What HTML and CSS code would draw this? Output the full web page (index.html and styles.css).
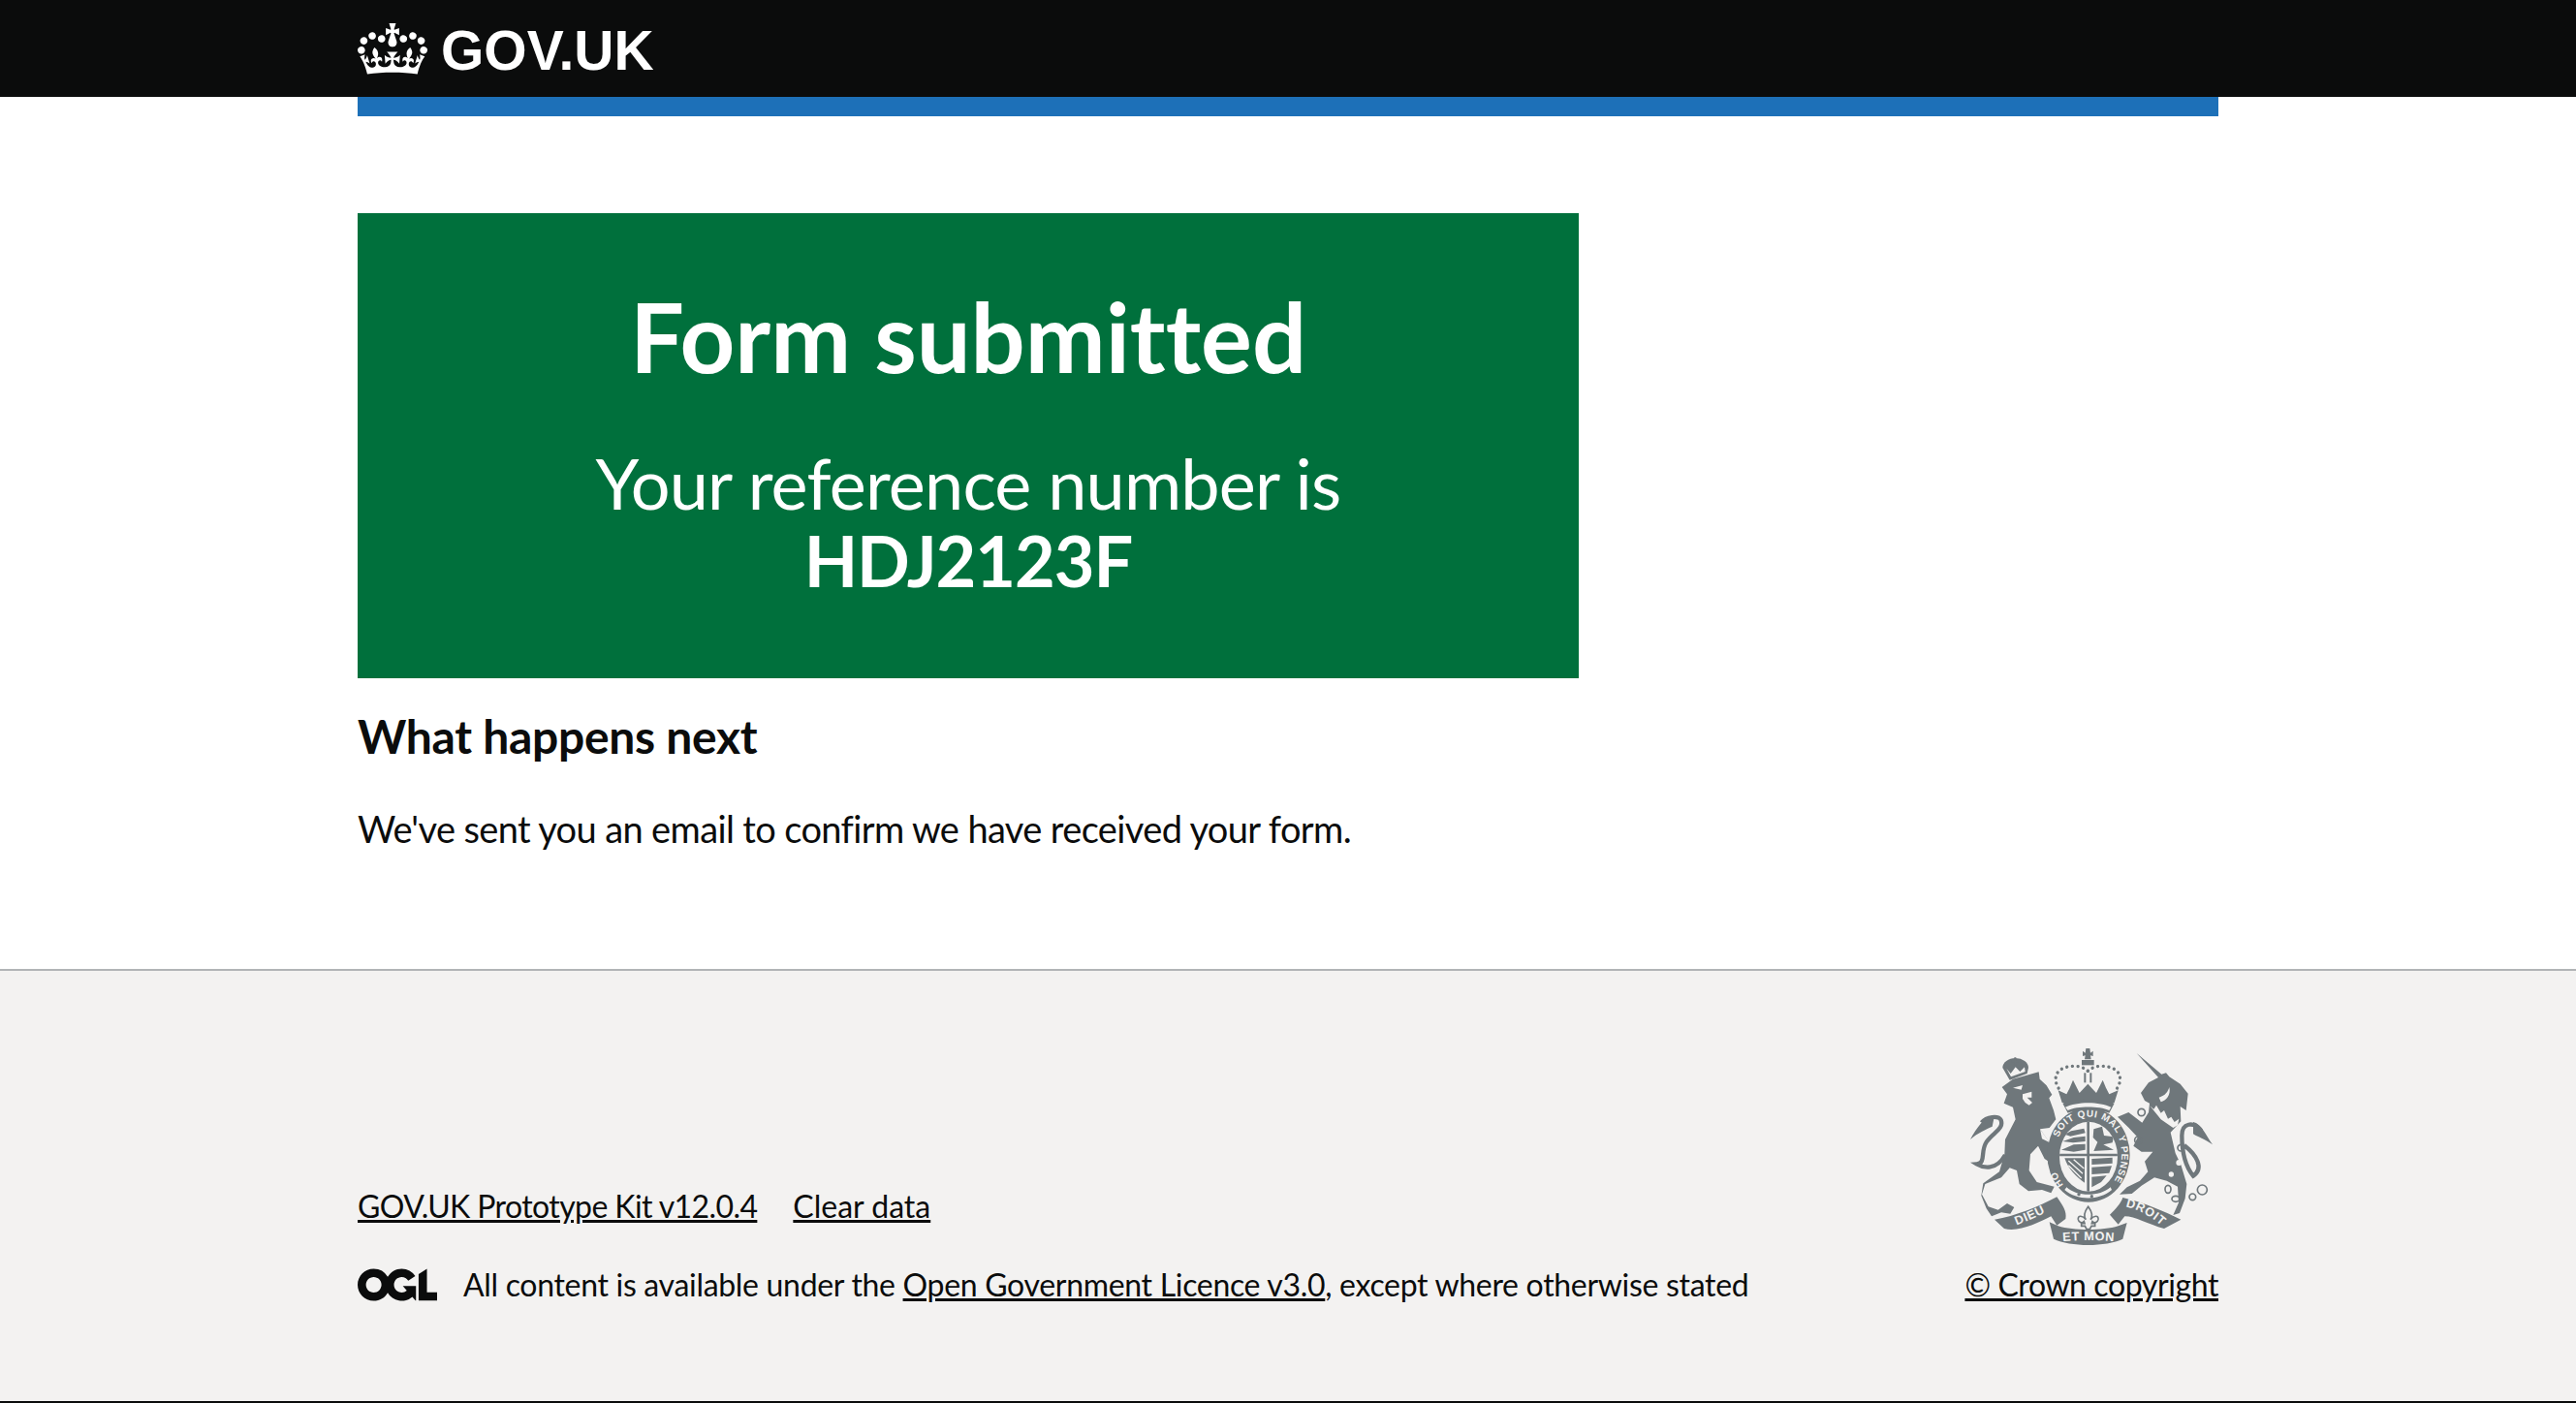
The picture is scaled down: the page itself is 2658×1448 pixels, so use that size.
FILE: index.html
```html
<!DOCTYPE html>
<html lang="en">
<head>
<meta charset="utf-8">
<title>Form submitted - GOV.UK</title>
<link rel="stylesheet" href="styles.css">
</head>
<body>

<header class="site-header">
  <div class="width-container">
    <a class="logo" href="#">
      <svg class="logo-crown" viewBox="0 0 132 97" aria-hidden="true"><path fill="currentColor" fill-rule="evenodd" d="M25 30.2c3.5 1.5 7.7-.2 9.1-3.7 1.5-3.6-.2-7.8-3.9-9.2-3.6-1.4-7.6.3-9.1 3.9-1.4 3.5.3 7.5 3.9 9zM9 39.5c3.6 1.5 7.8-.2 9.2-3.7 1.5-3.6-.2-7.8-3.9-9.1-3.6-1.5-7.6.2-9.1 3.8-1.4 3.5.3 7.5 3.8 9zM4.4 57.2c3.5 1.5 7.7-.2 9.1-3.8 1.5-3.6-.2-7.7-3.9-9.1-3.5-1.5-7.6.3-9.1 3.8-1.4 3.5.3 7.6 3.9 9.1zm38.3-21.4c3.5 1.5 7.7-.2 9.1-3.8 1.5-3.6-.2-7.7-3.9-9.1-3.6-1.5-7.6.3-9.1 3.8-1.3 3.6.4 7.7 3.9 9.1zm64.4-5.6c-3.6 1.5-7.8-.2-9.1-3.7-1.5-3.6.2-7.8 3.8-9.2 3.6-1.4 7.7.3 9.2 3.9 1.3 3.5-.4 7.5-3.9 9zm15.9 9.3c-3.6 1.5-7.7-.2-9.1-3.7-1.5-3.6.2-7.8 3.7-9.1 3.6-1.5 7.7.2 9.2 3.8 1.5 3.5-.3 7.5-3.8 9zm4.7 17.7c-3.6 1.5-7.8-.2-9.2-3.8-1.5-3.6.2-7.7 3.9-9.1 3.6-1.5 7.7.3 9.2 3.8 1.3 3.5-.4 7.6-3.9 9.1zM89.3 35.8c-3.6 1.5-7.8-.2-9.2-3.8-1.4-3.6.2-7.7 3.9-9.1 3.6-1.5 7.7.3 9.2 3.8 1.4 3.6-.3 7.7-3.9 9.1zM69.7 17.7l8.9 4.7V9.3l-8.9 2.8c-.2-.3-.5-.6-.9-.9L72.4 0H59.6l3.5 11.2c-.3.3-.6.5-.9.9l-8.8-2.8v13.1l8.8-4.7c.3.3.6.7.9.9l-5 15.4v.1c-.2.8-.4 1.6-.4 2.4 0 4.1 3.1 7.5 7 8.1h.2c.3 0 .7.1 1 .1.4 0 .7 0 1-.1h.2c4-.6 7.1-4.1 7.1-8.1 0-.8-.1-1.7-.4-2.4V34l-5.1-15.4c.4-.2.7-.6 1-.9zM66 92.8c16.9 0 32.8 1.1 47.1 3.2 4-16.9 8.9-26.7 14-33.5l-9.6-3.4c1 4.9 1.1 7.2 0 10.2-1.5-1.4-3-4.3-4.2-8.7L108.6 76c2.8-2 5-3.2 7.5-3.3-4.4 9.4-10 11.9-13.6 11.2-4.3-.8-6.3-4.6-5.6-7.9 1-4.7 5.7-5.9 8-.5 4.3-8.7-3-11.4-7.6-8.8 7.1-7.2 7.9-13.5 2.1-21.1-8 6.1-8.1 12.3-4.5 20.8-4.7-5.4-12.1-2.5-9.5 6.2 3.4-5.2 7.9-2 7.2 3.1-.6 4.3-6.4 7.8-13.5 7.2-10.3-.9-10.9-8-11.2-13.8 2.5-.5 7.1 1.8 11 7.3L80.2 60c-4.1 4.4-8 5.3-12.3 5.4 1.4-4.4 8-11.6 8-11.6H55.5s6.4 7.2 7.9 11.6c-4.2-.1-8-1-12.3-5.4l1.4 16.4c3.9-5.5 8.5-7.7 10.9-7.3-.3 5.8-.9 12.8-11.1 13.8-7.2.6-12.9-2.9-13.5-7.2-.7-5 3.8-8.3 7.1-3.1 2.7-8.7-4.6-11.6-9.4-6.2 3.7-8.5 3.6-14.7-4.6-20.8-5.8 7.6-5 13.9 2.2 21.1-4.7-2.6-11.9.1-7.7 8.8 2.3-5.5 7.1-4.2 8.1.5.7 3.3-1.3 7.1-5.7 7.9-3.5.7-9-1.8-13.5-11.2 2.5.1 4.7 1.3 7.5 3.3l-4.7-15.4c-1.2 4.4-2.7 7.2-4.3 8.7-1.1-3-.9-5.3 0-10.2l-9.5 3.4c5 6.9 9.9 16.7 14 33.5 14.8-2.1 30.8-3.2 47.7-3.2z"/></svg>
      <span class="logo-text">GOV.UK</span>
    </a>
  </div>
</header>
<div class="width-container header-bar"></div>

<main class="width-container main-wrapper">
  <div class="two-thirds">
    <div class="panel">
      <h1 class="panel-title">Form submitted</h1>
      <div class="panel-body">Your reference number is<br><strong>HDJ2123F</strong></div>
    </div>
    <h2 class="heading-m">What happens next</h2>
    <p class="body">We've sent you an email to confirm we have received your form.</p>
  </div>
</main>

<footer class="site-footer">
  <div class="width-container footer-row">
    <div class="footer-meta">
      <ul class="footer-links">
        <li class="kit-link"><a href="#">GOV.UK Prototype Kit v12.0.4</a></li>
        <li><a href="#">Clear data</a></li>
      </ul>
      <div class="licence">
        <svg class="ogl" viewBox="0 0 483.2 195.7" aria-hidden="true"><path fill="currentColor" d="M421.5 142.8V.1l-50.7 32.3v161.1h112.4v-50.7zm-122.3-9.6A47.12 47.12 0 0 1 221 97.8c0-26 21.1-47.1 47.1-47.1 16.7 0 31.4 8.7 39.7 21.8l42.7-27.2A97.63 97.63 0 0 0 268.1 0c-36.5 0-68.3 20.1-85.1 49.7A98 98 0 0 0 97.8 0C43.9 0 0 43.9 0 97.8s43.9 97.8 97.8 97.8c36.5 0 68.3-20.1 85.1-49.7a97.76 97.76 0 0 0 149.6 25.4l19.4 22.2h3v-87.8h-80l24.3 27.5zM97.8 145c-26 0-47.1-21.1-47.1-47.1s21.1-47.1 47.1-47.1 47.2 21 47.2 47S123.8 145 97.8 145"/></svg>
        <span>All content is available under the <a href="#">Open Government Licence v3.0</a>, except where otherwise stated</span>
      </div>
    </div>
    <div class="copyright">
      <svg class="crest" viewBox="100 70 750 612" role="img" aria-label="Royal coat of arms">
        <defs>
          <path id="garter-main" d="M366,372 C380,300 430,282 466,282 C530,282 568,330 568,400 C568,440 550,480 528,502"/>
          <path id="garter-ho" d="M404,506 C380,490 366,460 362,430"/>
          <path id="ribbon-left" d="M232,622 Q290,600 345,572"/>
          <path id="ribbon-mid" d="M378,668 Q465,660 555,668"/>
          <path id="ribbon-right" d="M578,560 Q640,572 695,622"/>
          <clipPath id="shield-clip"><ellipse cx="466" cy="405" rx="90" ry="108"/></clipPath>
        </defs>

        <!-- lion -->
        <path class="crest-fill" d="M198,190 L232,165 L312,143 L315,165 L336,185 L353,213 L344,224 L358,262 L365,290 L345,316 L316,320 L345,362 L368,392 L374,424 L352,426 L330,412 L310,372 L286,398 L282,448 L306,484 L360,498 L350,518 L322,508 L280,512 L252,490 L244,448 L222,440 L196,470 L146,490 L136,522 L156,560 L186,570 L214,550 L236,562 L224,582 L196,578 L166,590 L150,566 L134,526 L140,488 L190,452 L206,398 L208,352 L240,290 L232,252 L204,240 L214,212 Z"/>
        <path class="crest-white" d="M232,192 L262,184 L258,198 Z M262,212 L290,204 L290,222 L276,222 L292,238 L282,246 L270,238 L262,226 Z M316,320 L346,362 L322,350 Z"/>
        <path class="crest-line" d="M208,400 C180,450 140,440 120,428 C150,425 130,390 150,360 C170,330 205,320 195,292 C188,278 150,280 135,300"/>
        <path class="crest-fill" d="M175,278 C145,278 118,320 100,352 C122,332 150,320 168,312 Z"/>

        <!-- lion's crown -->
        <path class="crest-fill" d="M200,130 A40,30 0 0 1 280,130 L276,148 L222,168 Z"/>
        <path class="crest-white" d="M212,132 L225,148 L240,128 L254,142 L268,128 L270,142 L226,158 Z"/>
        <path class="crest-fill" d="M227,108 H236 V98 H242 V108 H250 V114 H242 V124 H236 V114 H227 Z"/>

        <!-- royal crown over shield -->
        <path class="crest-fill" d="M448,78 L456,84 L458,70 H470 L472,84 L480,78 V94 L472,92 L474,104 H454 L456,92 L448,94 Z"/>
        <rect class="crest-fill" x="445" y="106" width="38" height="16"/>
        <rect class="crest-fill" x="452" y="146" width="6" height="30"/>
        <rect class="crest-fill" x="470" y="146" width="6" height="30"/>
        <path class="crest-dots" d="M464,140 C440,118 400,122 376,138 C358,155 362,182 380,202"/>
        <path class="crest-dots" d="M464,140 C488,118 528,122 552,138 C570,155 566,182 548,202"/>
        <path class="crest-fill" d="M372,200 L398,212 L408,192 L418,168 L430,192 L438,208 L464,180 L490,208 L498,192 L510,168 L520,192 L530,212 L558,200 L546,238 L384,238 Z"/>

        <!-- garter and shield -->
        <ellipse class="crest-fill" cx="466" cy="400" rx="128" ry="146"/>
        <path class="crest-fill" d="M386,240 C420,224 510,224 546,240 L530,270 C500,258 430,258 402,270 Z"/>
        <path class="crest-white" d="M394,252 C430,234 500,234 536,252 L530,262 C500,248 430,248 402,262 Z"/>
        <ellipse class="crest-white" cx="466" cy="405" rx="90" ry="108"/>
        <g clip-path="url(#shield-clip)">
          <path class="crest-fill" d="M461,295 H469 V515 H461 Z M374,396 H558 V404 H374 Z"/>
          <path class="crest-fill" d="M392,336 L412,326 L452,318 L456,332 L410,342 Z M386,358 L420,346 L456,342 L456,358 L418,362 Z M382,384 L420,368 L456,366 L456,384 L420,390 Z"/>
          <path class="crest-fill" d="M482,320 L508,312 L514,340 L544,344 L540,362 L512,368 L544,384 L482,388 L494,360 L480,346 Z"/>
          <path class="crest-fill" d="M392,410 H454 V486 C430,470 404,445 392,410 Z"/>
          <path class="crest-white-line" d="M404,418 L448,458 M420,414 L452,442 M404,432 L444,472"/>
          <path class="crest-fill" d="M476,412 L540,408 L540,426 L476,430 Z M476,438 L538,434 L530,456 L476,460 Z M476,468 L522,464 L505,484 L476,500 Z"/>
        </g>
        <text class="crest-text"><textPath href="#garter-main" startOffset="50%" text-anchor="middle">SOIT QUI MAL Y PENSE</textPath></text>
        <text class="crest-text"><textPath href="#garter-ho" startOffset="50%" text-anchor="middle">HO</textPath></text>
        <path class="crest-white" d="M398,500 C430,530 500,530 534,500 L538,508 C500,542 430,542 392,508 Z"/>
        <circle class="crest-fill" cx="436" cy="522" r="5"/>
        <circle class="crest-fill" cx="476" cy="528" r="5"/>

        <!-- unicorn -->
        <path class="crest-fill" d="M615,85 L692,150 L706,146 L716,158 L750,180 L774,210 L768,262 L750,250 L752,296 L720,330 L735,395 L752,430 L770,490 L765,535 L748,580 L728,586 L745,548 L742,498 L708,480 L670,470 L630,495 L600,520 L562,522 L585,500 L625,480 L650,452 L640,420 L665,390 L630,390 L605,372 L618,345 L590,315 L556,282 L590,268 L632,300 L652,268 L655,240 L640,232 L628,208 L652,176 L682,160 Z"/>
        <path class="crest-white" d="M656,248 L668,258 L676,246 L690,270 L700,262 L712,288 L722,282 L732,298 L746,288 L742,308 L728,316 L690,290 Z"/>
        <path class="crest-white" d="M684,222 C704,216 712,204 716,190 C722,214 706,232 690,236 Z"/>
        <circle class="crest-white" cx="722" cy="460" r="8"/>
        <circle class="crest-white" cx="746" cy="424" r="9"/>
        <path class="crest-line" d="M762,370 C800,400 825,440 790,465 C770,440 755,400 755,340 C755,300 790,295 815,325"/>
        <path class="crest-fill" d="M790,298 C815,302 830,340 850,368 C825,350 805,345 790,335 Z"/>
        <circle class="crest-ring" cx="630" cy="268" r="11"/>
        <circle class="crest-ring" cx="620" cy="354" r="11"/>
        <circle class="crest-ring" cx="752" cy="378" r="10"/>
        <ellipse class="crest-ring" cx="712" cy="506" rx="9" ry="12"/>
        <ellipse class="crest-ring" cx="736" cy="536" rx="12" ry="9"/>
        <circle class="crest-ring" cx="788" cy="530" r="10"/>
        <circle class="crest-ring" cx="818" cy="508" r="15"/>

        <!-- motto ribbon -->
        <path class="crest-fill" d="M175,600 C240,590 310,560 368,530 C385,555 400,575 395,598 L368,618 L350,590 C310,610 250,640 205,628 Z"/>
        <path class="crest-fill" d="M345,608 L372,620 C420,635 510,635 558,620 L585,610 L572,660 C520,685 410,685 358,660 Z"/>
        <path class="crest-fill" d="M572,532 C640,548 700,575 752,600 L700,628 C650,615 610,590 578,590 L558,615 L532,585 C552,565 566,550 572,532 Z"/>
        <text class="crest-text ribbon-text"><textPath href="#ribbon-left" startOffset="50%" text-anchor="middle">DIEU</textPath></text>
        <text class="crest-text ribbon-text"><textPath href="#ribbon-mid" startOffset="50%" text-anchor="middle">ET MON</textPath></text>
        <text class="crest-text ribbon-text"><textPath href="#ribbon-right" startOffset="50%" text-anchor="middle">DROIT</textPath></text>

        <!-- fleur under shield -->
        <path class="crest-fleur" d="M465,560 C478,578 480,590 472,600 C482,588 498,585 496,600 C494,610 484,612 478,606 L476,612 H486 V620 H475 L470,630 H460 L455,620 H444 V612 H454 L452,606 C446,612 436,610 434,600 C432,585 448,588 458,600 C450,590 452,578 465,560 Z"/>
      </svg>
      <a href="#">© Crown copyright</a>
    </div>
  </div>
</footer>

</body>
</html>
```

FILE: styles.css
```css
body {
  margin: 0;
  background: #fff;
  color: #0b0c0c;
  font-family: Lato, sans-serif;
  font-size: 38px;
  line-height: 50px;
  font-variant-ligatures: none;
}

a {
  color: inherit;
}

.width-container {
  width: 1920px;
  margin: 0 auto;
}

.site-header {
  background: #0b0c0c;
  height: 100px;
}

.logo {
  display: flex;
  align-items: center;
  height: 100px;
  color: #fff;
  text-decoration: none;
}

.logo-crown {
  width: 72px;
  height: 53px;
  margin-right: 14px;
}

.logo-text {
  font-family: "Liberation Sans", sans-serif;
  font-weight: 700;
  font-size: 57px;
  padding-top: 4px;
}

.header-bar {
  height: 20px;
  background: #1d70b8;
}

.main-wrapper {
  box-sizing: border-box;
  height: 880px;
  padding-top: 100px;
}

.two-thirds {
  width: 1260px;
}

.panel {
  box-sizing: border-box;
  height: 480px;
  padding: 72px 70px 0;
  background: #00703c;
  color: #fff;
  text-align: center;
}

.panel-title {
  margin: 0 0 56px;
  font-size: 99px;
  line-height: 110px;
}

.panel-body {
  font-size: 72px;
  line-height: 80px;
  letter-spacing: -0.8px;
}

.panel-body strong {
  letter-spacing: -1px;
}

.heading-m {
  margin: 30px 0 40px;
  font-size: 48px;
  line-height: 60px;
  letter-spacing: -0.3px;
}

.body {
  margin: 0;
  letter-spacing: -0.63px;
}

.site-footer {
  box-sizing: border-box;
  height: 448px;
  padding-top: 80px;
  background: #f3f2f1;
  border-top: 2px solid #b1b4b6;
  border-bottom: 2px solid #0b0c0c;
  font-size: 32px;
  letter-spacing: -0.31px;
}

.footer-row {
  display: flex;
  justify-content: space-between;
  align-items: flex-end;
}

.footer-links {
  display: flex;
  gap: 37px;
  margin: 0 0 31px;
  padding: 0;
  list-style: none;
  letter-spacing: 0;
}

.kit-link {
  letter-spacing: -0.6px;
}

.licence {
  display: flex;
  align-items: center;
  gap: 27px;
}

.ogl {
  width: 82px;
  height: 34px;
}

.copyright {
  text-align: center;
  letter-spacing: -0.4px;
}

.crest {
  display: block;
  width: 250px;
  height: 204px;
  margin: 0 auto 15px;
}

.crest-fill {
  fill: #6f777b;
}

.crest-white {
  fill: #f3f2f1;
}

.crest-line {
  fill: none;
  stroke: #6f777b;
  stroke-width: 13;
}

.crest-white-line {
  fill: none;
  stroke: #f3f2f1;
  stroke-width: 4;
}

.crest-dots {
  fill: none;
  stroke: #6f777b;
  stroke-width: 10;
  stroke-linecap: round;
  stroke-dasharray: 0.1 17;
}

.crest-ring {
  fill: none;
  stroke: #6f777b;
  stroke-width: 5;
}

.crest-fleur {
  fill: #f3f2f1;
  stroke: #6f777b;
  stroke-width: 5;
}

.crest-text {
  fill: #f3f2f1;
  font-family: "Liberation Sans", sans-serif;
  font-weight: 700;
  font-size: 30px;
  letter-spacing: 2px;
}

.ribbon-text {
  font-size: 38px;
}
```
